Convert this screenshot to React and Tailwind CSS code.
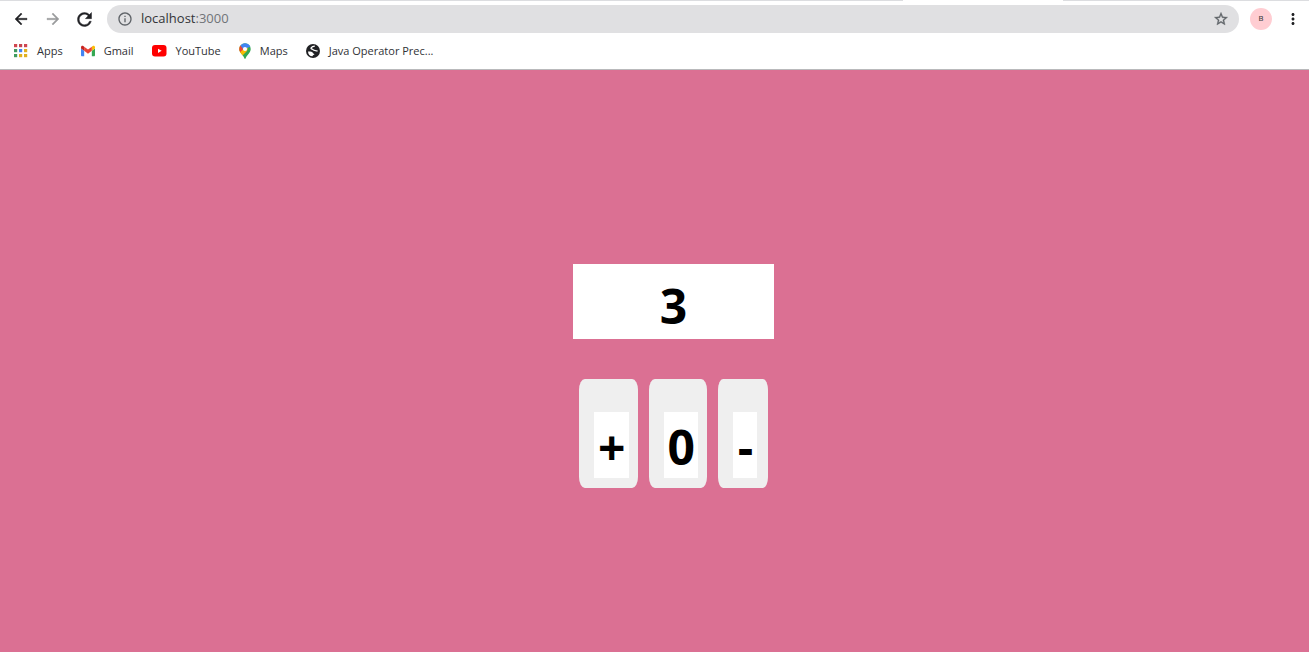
import { useState } from "react";
import { MdInfoOutline, MdMoreVert } from "react-icons/md";

const APP_COLORS = [
  "#d0464f", "#c5454f", "#d0464f",
  "#3f9b5f", "#4285f4", "#e0b020",
  "#3f9b5f", "#e0b020", "#e0b020",
];

const GLYPHS = {
  back: "M20 11H7.83l5.59-5.59L12 4l-8 8 8 8 1.41-1.41L7.83 13H20v-2z",
  forward: "M12 4l-1.41 1.41L16.17 11H4v2h12.17l-5.58 5.59L12 20l8-8z",
  reload:
    "M17.65 6.35A7.96 7.96 0 0 0 12 4c-4.42 0-7.99 3.58-7.99 8s3.57 8 7.99 8c3.73 0 6.84-2.55 7.73-6h-2.08A5.99 5.99 0 0 1 12 18c-3.31 0-6-2.69-6-6s2.69-6 6-6c1.66 0 3.14.69 4.22 1.78L13 11h7V4l-2.35 2.35z",
  star:
    "M22 9.24l-7.19-.62L12 2 9.19 8.63 2 9.24l5.46 4.73L5.82 21 12 17.27 18.18 21l-1.63-7.03L22 9.24zM12 15.4l-3.76 2.27 1-4.28-3.32-2.88 4.38-.38L12 6.1l1.71 4.04 4.38.38-3.32 2.88 1 4.28L12 15.4z",
};

function Glyph({ name, className }) {
  return (
    <svg
      viewBox="0 0 24 24"
      className={className}
      fill="currentColor"
      stroke="currentColor"
      strokeWidth="0.5"
      aria-hidden="true"
    >
      <path d={GLYPHS[name]} />
    </svg>
  );
}

function AppsIcon() {
  return (
    <svg viewBox="0 0 14 14" className="size-3.5" aria-hidden="true">
      {APP_COLORS.map((color, i) => (
        <rect key={i} x={(i % 3) * 5} y={Math.floor(i / 3) * 5} width="3.2" height="3.2" fill={color} />
      ))}
    </svg>
  );
}

function GmailIcon() {
  return (
    <svg viewBox="52 42 88 66" className="h-3 w-3.5" aria-hidden="true">
      <path fill="#4285f4" d="M58 108h14V74L52 59v43c0 3.32 2.69 6 6 6" />
      <path fill="#34a853" d="M120 108h14c3.32 0 6-2.69 6-6V59l-20 15" />
      <path fill="#fbbc04" d="M120 48v26l20-15v-8c0-7.42-8.47-11.65-14.4-7.2" />
      <path fill="#ea4335" d="M72 74V48l24 18 24-18v26L96 92" />
      <path fill="#c5221f" d="M52 51v8l20 15V48l-5.600-4.200c-5.940-4.450-14.400-.22-14.400 7.200" />
    </svg>
  );
}

function YouTubeIcon() {
  return (
    <svg viewBox="0 0 15 12" className="h-3 w-[15px]" aria-hidden="true">
      <rect width="14.500" height="11.500" rx="3" fill="#f00" />
      <path d="M6 3.700v4.200l3.700-2.100z" fill="#fff" />
    </svg>
  );
}

function MapsIcon() {
  return (
    <svg viewBox="0 0 12 16" className="h-4 w-3" aria-hidden="true">
      <defs>
        <clipPath id="pin">
          <path d="M6 .3A5.700 5.700 0 0 0 .3 6c0 2 .8 3.200 2.200 4.900C4 12.700 4.900 13.600 5.300 15.200c.15.700 1.250.700 1.400 0 .4-1.600 1.300-2.500 2.800-4.300C10.900 9.200 11.700 8 11.700 6A5.700 5.700 0 0 0 6 .3z" />
        </clipPath>
      </defs>
      <g clipPath="url(#pin)">
        <rect width="12" height="16" fill="#34a853" />
        <path d="M0 10.800L6 5.800 10 1.500 8 8 3 13z" fill="#fbbc04" />
        <path d="M0 2l6 4-4.800 5.500L0 9z" fill="#fbbc04" />
        <path d="M0 1.500l1.600.8L5 5.500.8 9.500 0 8z" fill="#ea4335" />
        <path d="M1 0h9l1 2.500-5.500 5.500L1.500 2.400z" fill="#4285f4" />
        <path d="M8 0h4v3.500L9.500 4.500 7.500 2z" fill="#4285f4" />
      </g>
      <circle cx="6" cy="6" r="2.100" fill="#fff" />
    </svg>
  );
}

function GlobeIcon() {
  return (
    <svg viewBox="0 0 14 14" className="size-3.5" aria-hidden="true">
      <circle cx="7" cy="7" r="7" fill="#202124" />
      <path
        d="M8.800 2.200C7.600 2.300 6 2.700 5.300 3.600c-.6.900-.1 1.500.8 1.500.9.100.9.900 1.700 1.100.9.200 1.300.100 2 .5.500.3 1.100.3 1.800.1"
        fill="none"
        stroke="#fff"
        strokeWidth="1.300"
      />
      <path
        d="M2 7.400c1.400.1 2.900-.1 4.100.5.900.5.500 1.200 1.300 1.500.8.300 1.300.5.900 1.200-.4.600-1.500.4-1.600 1.100-.1.400 0 .3-.2.600A5.200 5.200 0 0 1 2 7.400z"
        fill="#fff"
      />
    </svg>
  );
}

function Bookmark({ icon, children }) {
  return (
    <a href="#" className="flex items-center gap-[9px] whitespace-nowrap">
      {icon}
      {children}
    </a>
  );
}

function CounterButton({ label, onClick, children }) {
  return (
    <button
      type="button"
      aria-label={label}
      onClick={onClick}
      className="flex min-w-[50px] rounded-[10%] bg-[#efefef] pt-[33px] pr-[9px] pb-[10px] pl-[15px]"
    >
      <span className="min-w-6 bg-white pt-1 pr-[3px] pl-1 text-center text-5xl leading-[62px] font-bold">
        {children}
      </span>
    </button>
  );
}

export default function App() {
  const [count, setCount] = useState(3);

  return (
    <div className="flex min-h-screen flex-col bg-[#db7093] font-['Open_Sans','Noto_Sans',sans-serif] text-black">
      <header className="border-b border-[#b9b9bb] bg-white">
        <div className="flex h-px bg-[#dcdde0]">
          <div className="ml-[69%] w-40 bg-white" />
        </div>
        <div className="flex items-center pt-1 pr-[7px] pl-3">
          <button type="button" aria-label="Back" className="mr-3.5 text-[#202124]">
            <Glyph name="back" className="size-[18px]" />
          </button>
          <button type="button" aria-label="Forward" className="mr-3 text-[#9a9b9d]">
            <Glyph name="forward" className="size-[18px]" />
          </button>
          <button type="button" aria-label="Reload" className="mr-3 text-[#202124]">
            <Glyph name="reload" className="size-[21px]" />
          </button>
          <div className="flex h-7 flex-1 items-center rounded-full bg-[#e0e0e2] px-2.5 text-[#5f6368]">
            <MdInfoOutline className="size-4" />
            <a href="#" className="ml-2 flex-1 text-[13px] text-[#707478]">
              <span className="text-[#333538]">localhost</span>:3000
            </a>
            <button type="button" aria-label="Bookmark this page">
              <Glyph name="star" className="size-4" />
            </button>
          </div>
          <button
            type="button"
            aria-label="Profile"
            className="ml-[11px] size-[22px] rounded-full bg-[#ffcdd2] font-['Roboto',sans-serif] text-[8px] text-[#444]"
          >
            B
          </button>
          <button type="button" aria-label="Menu" className="ml-3 text-[#202124]">
            <MdMoreVert className="size-[18px]" />
          </button>
        </div>
        <nav className="flex h-9 items-center gap-[18px] pl-3.5 text-[11px] text-[#303236]">
          <Bookmark icon={<AppsIcon />}>Apps</Bookmark>
          <Bookmark icon={<GmailIcon />}>Gmail</Bookmark>
          <Bookmark icon={<YouTubeIcon />}>YouTube</Bookmark>
          <Bookmark icon={<MapsIcon />}>Maps</Bookmark>
          <Bookmark icon={<GlobeIcon />}>Java Operator Prec...</Bookmark>
        </nav>
      </header>
      <main className="flex flex-1 flex-col items-center justify-center gap-10 pt-[30px] pl-[38px]">
        <output className="block w-[201px] bg-white pt-[11px] pb-0.5 text-center text-5xl leading-[62px] font-bold">
          {count}
        </output>
        <div className="flex gap-[11px]">
          <CounterButton label="Increase" onClick={() => setCount(count + 1)}>+</CounterButton>
          <CounterButton label="Reset" onClick={() => setCount(0)}>0</CounterButton>
          <CounterButton label="Decrease" onClick={() => setCount(count - 1)}>-</CounterButton>
        </div>
      </main>
    </div>
  );
}
